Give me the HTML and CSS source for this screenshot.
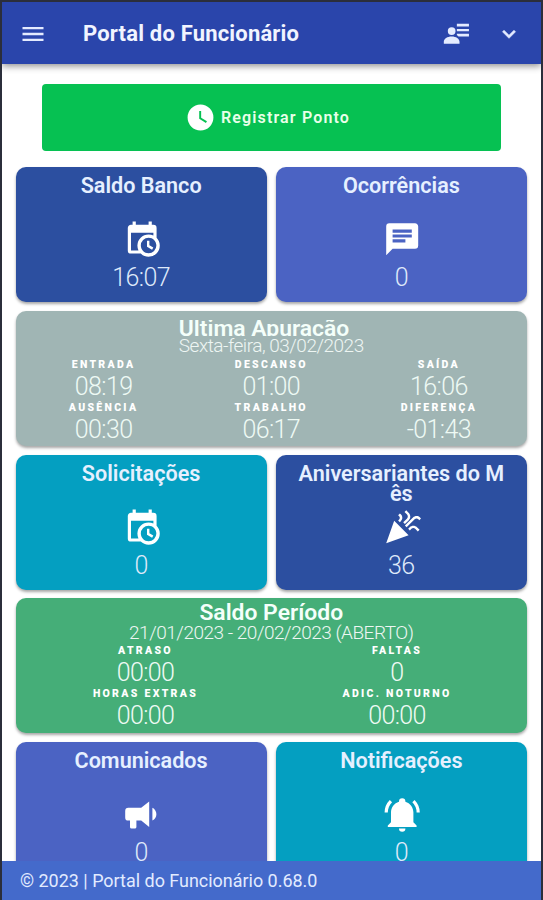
FILE: index.html
```html
<!DOCTYPE html>
<html lang="pt-BR">
<head>
<meta charset="utf-8">
<title>Portal do Funcionário</title>
<link rel="stylesheet" href="styles.css">
</head>
<body>
<svg class="defs" aria-hidden="true">
  <symbol id="calendar" viewBox="0 0 24 24"><path d="M15 13h1.5v2.82l2.44 1.41-.75 1.3L15 16.69V13m4-5H5v11h4.67c-.43-.91-.67-1.93-.67-3a7 7 0 0 1 7-7c1.07 0 2.09.24 3 .67V8M5 21a2 2 0 0 1-2-2V5c0-1.11.89-2 2-2h1V1h2v2h8V1h2v2h1a2 2 0 0 1 2 2v6.1c1.24 1.26 2 2.99 2 4.9a7 7 0 0 1-7 7c-1.91 0-3.64-.76-4.9-2H5m11-9.85A4.85 4.85 0 0 0 11.15 16c0 2.68 2.17 4.85 4.85 4.85A4.85 4.85 0 0 0 20.85 16c0-2.68-2.17-4.85-4.85-4.85z"/></symbol>
</svg>
<div class="app">
  <header class="topbar">
    <svg class="menu" viewBox="0 0 24 24"><path d="M3 6h18v2H3V6m0 5h18v2H3v-2m0 5h18v2H3v-2z"/></svg>
    <h1 class="brand">Portal do Funcionário</h1>
    <svg class="account" viewBox="0 0 24 24"><circle cx="8" cy="10" r="3.2"/><path d="M14.500 20.500H1.500v-1.600c0-2.600 2.900-4.400 6.500-4.400s6.500 1.800 6.500 4.400v1.600M22.300 4v2.200h-10V4h10m0 4.200v2h-10v-2h10m0 4v2.200h-8.600l-1.400-1.200v-1h10z"/></svg>
    <svg class="chevron" viewBox="0 0 24 24"><path d="M7.41 8.580 12 13.170l4.590-4.590L18 10l-6 6-6-6z"/></svg>
  </header>
  <main class="content">
    <button class="punch">
      <svg viewBox="0 0 24 24"><path d="M12 2A10 10 0 0 0 2 12a10 10 0 0 0 10 10 10 10 0 0 0 10-10A10 10 0 0 0 12 2m4.200 14.200L11 13V7h1.500v5.200l4.500 2.700-.8 1.300z"/></svg>
      <span>Registrar Ponto</span>
    </button>
    <div class="grid">
      <section class="card blue">
        <h2 class="title">Saldo Banco</h2>
        <svg class="icon calendar"><use href="#calendar"/></svg>
        <div class="value">16:07</div>
      </section>
      <section class="card indigo">
        <h2 class="title">Ocorrências</h2>
        <svg class="icon" viewBox="0 0 24 24"><path d="M20 2H4a2 2 0 0 0-2 2v18l4-4h14a2 2 0 0 0 2-2V4c0-1.100-.9-2-2-2M6 9h12v2H6m8 3H6v-2h8m4-4H6V6h12"/></svg>
        <div class="value">0</div>
      </section>
      <section class="card wide sage">
        <div class="heading">
          <h2 class="headline clipped">Última Apuração</h2>
          <p class="sub">Sexta-feira, 03/02/2023</p>
        </div>
        <dl class="stats three">
          <div><dt>Entrada</dt><dd>08:19</dd></div>
          <div><dt>Descanso</dt><dd>01:00</dd></div>
          <div><dt>Saída</dt><dd>16:06</dd></div>
          <div><dt>Ausência</dt><dd>00:30</dd></div>
          <div><dt>Trabalho</dt><dd>06:17</dd></div>
          <div><dt>Diferença</dt><dd>-01:43</dd></div>
        </dl>
      </section>
      <section class="card cyan">
        <h2 class="title">Solicitações</h2>
        <svg class="icon calendar"><use href="#calendar"/></svg>
        <div class="value">0</div>
      </section>
      <section class="card blue">
        <h2 class="title">Aniversariantes do Mês</h2>
        <svg class="icon" viewBox="0 0 24 24"><path d="M14.530 1.450l-1.080 1.080 1.600 1.600c.32.37.45.77.45 1.220s-.13.850-.45 1.150l-2.400 2.450L13.700 10l2.430-2.400c.62-.67.92-1.440.92-2.300 0-.83-.3-1.580-.92-2.250l-1.600-1.600M10.550 3.470 9.470 4.550l.61.560c.28.280.42.640.42 1.060s-.14.790-.42 1.080l-.61.600 1.080 1.080.6-.66c.62-.62.92-1.310.92-2.100 0-.86-.3-1.590-.92-2.200l-.6-.5M21 5.060c-.87 0-1.620.32-2.250.94L13.700 11l1.050 1 5.030-5c.34-.3.720-.47 1.220-.47.420 0 .81.160 1.130.47l.56.600 1.080-1.100-.61-.55c-.66-.62-1.330-.89-2.160-.89M7 8 2 22l14-5-9-9m12 3.060c-.89 0-1.670.32-2.310.94l-.94.940L16.800 14l.98-.97c.34-.33.720-.47 1.220-.47.420 0 .81.140 1.130.47l1.640 1.600 1.080-1.070-1.600-1.560c-.67-.62-1.420-.94-2.250-.94z"/></svg>
        <div class="value">36</div>
      </section>
      <section class="card wide green">
        <div class="heading">
          <h2 class="headline">Saldo Período</h2>
          <p class="sub">21/01/2023 - 20/02/2023 (ABERTO)</p>
        </div>
        <dl class="stats two">
          <div><dt>Atraso</dt><dd>00:00</dd></div>
          <div><dt>Faltas</dt><dd>0</dd></div>
          <div><dt>Horas Extras</dt><dd>00:00</dd></div>
          <div><dt>Adic. Noturno</dt><dd>00:00</dd></div>
        </dl>
      </section>
      <section class="card indigo">
        <h2 class="title">Comunicados</h2>
        <svg class="icon" viewBox="0 0 24 24"><path d="M12 8H4a2 2 0 0 0-2 2v4a2 2 0 0 0 2 2h1v4a1 1 0 0 0 1 1h2a1 1 0 0 0 1-1v-4h3l5 4V4l-5 4m9.500 4c0 1.710-.96 3.260-2.500 4V8c1.530.750 2.500 2.300 2.500 4z"/></svg>
        <div class="value">0</div>
      </section>
      <section class="card cyan">
        <h2 class="title">Notificações</h2>
        <svg class="icon" viewBox="0 0 24 24"><path d="M21 19v1H3v-1l2-2v-6c0-3.100 2.030-5.830 5-6.710V4a2 2 0 0 1 4 0v.29c2.970.88 5 3.610 5 6.710v6l2 2m-7 2a2 2 0 0 1-4 0m9.750-17.810-1.420 1.420A8.980 8.980 0 0 1 21 11h2c0-2.930-1.160-5.750-3.250-7.810M1 11h2c0-2.400.96-4.700 2.670-6.390L4.250 3.190A10.960 10.960 0 0 0 1 11z"/></svg>
        <div class="value">0</div>
      </section>
    </div>
  </main>
  <footer class="footer">© 2023 | Portal do Funcionário 0.68.0</footer>
</div>
</body>
</html>
```
FILE: styles.css
```css
* { box-sizing: border-box; margin: 0; padding: 0; }
body { font-family: Roboto, "Liberation Sans", sans-serif; color: #fff; background: #fff; }
svg { fill: currentColor; flex: none; display: block; }
.defs { display: none; }
.app {
  height: 900px;
  border: 2px solid #2b2e3b;
  border-bottom: 0;
  display: flex;
  flex-direction: column;
  overflow: hidden;
}
.topbar {
  position: relative;
  height: 62px;
  flex: none;
  display: flex;
  align-items: center;
  padding: 0 19px 0 17px;
  background: #2a45ab;
  box-shadow: 0 2px 7px rgba(0, 0, 0, .45);
  color: #e4ebff;
}
.menu { width: 28px; height: 28px; margin-top: 2px; }
.brand { margin: 2px 0 0 36px; font-size: 22px; font-weight: 700; letter-spacing: .18px; line-height: 30px; flex: 1; color: #f1f4ff; }
.account { width: 29px; height: 29px; margin-right: 25px; }
.chevron { width: 26px; height: 26px; margin-top: 2px; stroke: currentColor; stroke-width: .6; }
.content { flex: 1; min-height: 0; overflow: hidden; padding: 20px 14px 0 13.500px; }
.punch {
  display: flex;
  align-items: center;
  justify-content: center;
  gap: 5px;
  width: 459px;
  height: 67px;
  padding-right: 8px;
  margin: 0 auto 16px 26.500px;
  border: 0;
  border-radius: 4px;
  background: #06c152;
  color: #e9ffe9;
  font: 600 16px Roboto, sans-serif;
  letter-spacing: 1.150px;
}
.punch svg { width: 31px; height: 31px; color: #fff; }
.grid {
  display: grid;
  grid-template-columns: 1fr 1fr;
  grid-auto-rows: 135px;
  gap: 8.750px 9px;
}
.card {
  border-radius: 10px;
  box-shadow: 0 2px 3px rgba(0, 0, 0, .35);
  display: flex;
  flex-direction: column;
  align-items: center;
  text-align: center;
  overflow: hidden;
}
.wide { grid-column: 1 / -1; }
.blue { background: #2c4fa0; }
.indigo { background: #4b63c3; }
.cyan { background: #049fc1; }
.sage { background: #a0b5b4; }
.green { background: #45ae78; }
.title {
  width: 210px;
  height: 44px;
  margin-top: 9px;
  font-size: 21.600px;
  font-weight: 600;
  line-height: 20px;
  word-break: break-all;
  color: #e6f0ff;
}
.icon { width: 38.400px; height: 38.400px; margin-left: 1px; }
.calendar { margin-left: 3px; }
.value { margin-top: 2px; font-size: 25px; font-weight: 300; letter-spacing: -.600px; line-height: 35px; color: #dfe9fa; }
.heading { margin-top: 9px; }
.green .heading { margin-top: 5px; }
.headline { font-size: 22.900px; font-weight: 600; line-height: 19px; height: 20px; color: #f4fffa; }
.clipped { text-align: left; overflow: hidden; height: 16.500px; line-height: 17px; }
.sub { font-size: 19px; font-weight: 300; letter-spacing: -.490px; line-height: 19px; color: #eef6f3; }
.stats { display: grid; width: 503px; margin-top: 2px; }
.green .stats { margin-top: 1px; }
.three { grid-template-columns: repeat(3, 1fr); }
.two { grid-template-columns: repeat(2, 1fr); }
.stats dt {
  font-size: 10.500px;
  font-weight: 900;
  letter-spacing: 2.300px;
  line-height: 16px;
  text-transform: uppercase;
}
.stats dd { font-size: 25px; font-weight: 300; letter-spacing: -.600px; line-height: 27px; color: #eefaf4; }
.footer {
  flex: none;
  height: 39px;
  padding-left: 18px;
  background: #446acb;
  color: #e2ebff;
  font-size: 17.950px;
  line-height: 39px;
}
```
